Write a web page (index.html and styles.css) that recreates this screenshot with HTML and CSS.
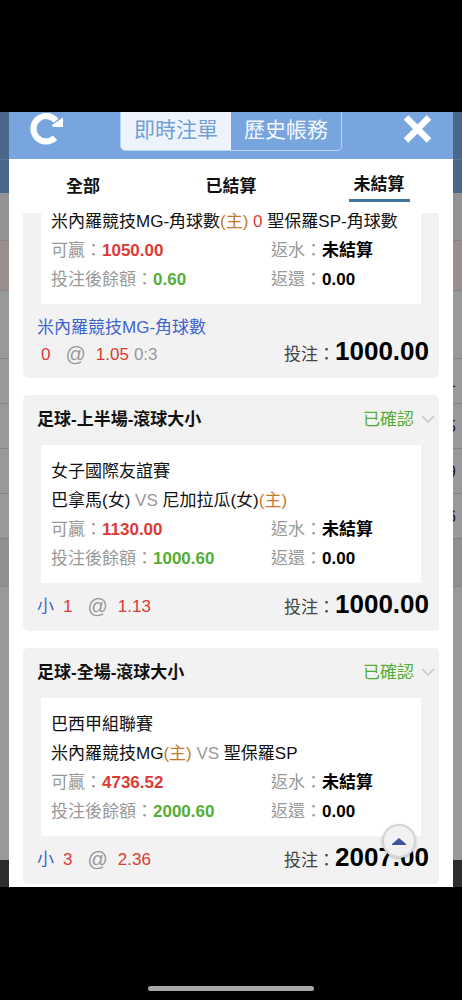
FILE: index.html
```html
<!DOCTYPE html>
<html lang="zh-Hant">
<head>
<meta charset="utf-8">
<meta name="viewport" content="width=device-width, initial-scale=1">
<title>未結算注單</title>
<link rel="stylesheet" href="styles.css">
</head>
<body>
<div class="screen">
  <div class="stage">
    <div class="backdrop" aria-hidden="true">
      <div class="row nav"></div>
      <div class="row subnav"></div>
      <div class="row head"></div>
      <div class="row pink"></div>
      <div class="row tall"></div>
      <div class="row">1</div>
      <div class="row">5</div>
      <div class="row">9</div>
      <div class="row">6</div>
      <div class="row group"></div>
      <div class="row rest"></div>
      <div class="row foot"></div>
    </div>
    <main class="panel">
      <header class="bar">
        <button class="icon-btn refresh" type="button" aria-label="重新整理">
          <svg width="36" height="36" viewBox="0 0 36 36"><path d="M26 25.800A12.700 12.700 0 1 1 27 8.700" fill="none" stroke="#fff" stroke-width="6.200"/><path d="M34 5.500V15H24L23 13z" fill="#fff"/></svg>
        </button>
        <div class="switch">
          <button class="switch-btn active" type="button">即時注單</button>
          <button class="switch-btn" type="button">歷史帳務</button>
        </div>
        <button class="icon-btn close" type="button" aria-label="關閉">
          <svg width="30" height="30" viewBox="0 0 30 30"><path d="M3 3.500l23 23M26 3.500l-23 23" stroke="#fff" stroke-width="6.400"/></svg>
        </button>
      </header>
      <nav class="tabs">
        <button class="tab" type="button">全部</button>
        <button class="tab" type="button">已結算</button>
        <button class="tab current" type="button"><span>未結算</span></button>
      </nav>
      <div class="list">
        <article class="card">
          <div class="box">
            <p>米內羅競技MG-角球數<span class="home">(主)</span> <span class="red">0</span> 聖保羅SP-角球數</p>
            <dl class="stats">
              <div><dt>可贏：</dt><dd class="red">1050.00</dd></div>
              <div><dt>返水：</dt><dd>未結算</dd></div>
              <div><dt>投注後餘額：</dt><dd class="green">0.60</dd></div>
              <div><dt>返還：</dt><dd>0.00</dd></div>
            </dl>
          </div>
          <footer class="card-foot tall-foot">
            <div>
              <div class="blue">米內羅競技MG-角球數</div>
              <div class="pick indent"><span class="line">0</span><span class="at">@</span><span class="odds">1.05</span><span class="score">0:3</span></div>
            </div>
            <div class="stake"><span>投注：</span><strong>1000.00</strong></div>
          </footer>
        </article>

        <article class="card">
          <header class="card-head">
            <h2>足球-上半場-滾球大小</h2>
            <button class="status" type="button">已確認
              <svg width="14" height="9" viewBox="0 0 14 9"><path d="M1 1l6 6 6-6" fill="none" stroke="#cfcfcf" stroke-width="1.800"/></svg>
            </button>
          </header>
          <div class="box">
            <p>女子國際友誼賽</p>
            <p>巴拿馬(女) <span class="muted">VS</span> 尼加拉瓜(女)<span class="home">(主)</span></p>
            <dl class="stats">
              <div><dt>可贏：</dt><dd class="red">1130.00</dd></div>
              <div><dt>返水：</dt><dd>未結算</dd></div>
              <div><dt>投注後餘額：</dt><dd class="green">1000.60</dd></div>
              <div><dt>返還：</dt><dd>0.00</dd></div>
            </dl>
          </div>
          <footer class="card-foot">
            <div class="pick"><span class="side">小</span><span class="line">1</span><span class="at">@</span><span class="odds">1.13</span></div>
            <div class="stake"><span>投注：</span><strong>1000.00</strong></div>
          </footer>
        </article>

        <article class="card">
          <header class="card-head">
            <h2>足球-全場-滾球大小</h2>
            <button class="status" type="button">已確認
              <svg width="14" height="9" viewBox="0 0 14 9"><path d="M1 1l6 6 6-6" fill="none" stroke="#cfcfcf" stroke-width="1.800"/></svg>
            </button>
          </header>
          <div class="box">
            <p>巴西甲組聯賽</p>
            <p>米內羅競技MG<span class="home">(主)</span> <span class="muted">VS</span> 聖保羅SP</p>
            <dl class="stats">
              <div><dt>可贏：</dt><dd class="red">4736.52</dd></div>
              <div><dt>返水：</dt><dd>未結算</dd></div>
              <div><dt>投注後餘額：</dt><dd class="green">2000.60</dd></div>
              <div><dt>返還：</dt><dd>0.00</dd></div>
            </dl>
          </div>
          <footer class="card-foot">
            <div class="pick"><span class="side">小</span><span class="line">3</span><span class="at">@</span><span class="odds">2.36</span></div>
            <div class="stake"><span>投注：</span><strong>2007.00</strong></div>
          </footer>
        </article>
      </div>
      <button class="to-top" type="button" aria-label="回到頂部">
        <svg width="14" height="7" viewBox="0 0 14 7"><path d="M7 0l7 6v1H0V6z" fill="#3f529a"/></svg>
      </button>
    </main>
  </div>
  <div class="home-area"><div class="home-bar"></div></div>
</div>
</body>
</html>
```

FILE: styles.css
```css
* {
  box-sizing: border-box;
}

body {
  margin: 0;
  background: #000;
  color: #111;
  font: 17px/29px "Liberation Sans", "Noto Sans CJK TC", sans-serif;
}

button {
  border: 0;
  padding: 0;
  background: none;
  color: inherit;
  font: inherit;
  cursor: pointer;
}

h2, p, dl, dd {
  margin: 0;
}

svg {
  display: block;
}

.screen {
  display: flex;
  flex-direction: column;
  height: 100vh;
  padding-top: 112px;
}

.stage {
  position: relative;
  flex: 1;
  min-height: 0;
  padding: 0 9px;
  overflow: hidden;
}

/* Dimmed page behind the panel */
.backdrop {
  position: absolute;
  inset: 0;
  display: flex;
  flex-direction: column;
  background: #999;
}

.row {
  flex: none;
  height: 45px;
  padding-right: 6px;
  border-bottom: 1px solid #858585;
  color: #222;
  font-size: 16px;
  line-height: 45px;
  text-align: right;
}

.nav {
  height: 48px;
  background: #4a678c;
  border-color: #59749a;
}

.subnav {
  height: 33px;
  background: #4a678c;
  border: 0;
}

.head {
  height: 48px;
  background: #939393;
}

.pink {
  height: 50px;
  background: #998d8d;
}

.tall {
  height: 68px;
}

.group {
  height: 48px;
  background: #8f8f8f;
}

.rest {
  flex: 1;
  border: 0;
}

.foot {
  height: 27px;
  background: #2d2d2d;
  border: 0;
}

/* Panel */
.panel {
  position: relative;
  display: flex;
  flex-direction: column;
  height: 100%;
  background: #fff;
}

.bar {
  flex: none;
  display: flex;
  justify-content: space-between;
  height: 47px;
  padding: 0 20px;
  background: #79a5df;
}

.icon-btn {
  display: flex;
  align-items: flex-start;
  width: 36px;
}

.close {
  justify-content: flex-end;
  padding-top: 2px;
}

.switch {
  display: flex;
  height: 39px;
  border: 1px solid #b9d3f3;
  border-top: 0;
  border-radius: 0 0 5px 5px;
  overflow: hidden;
}

.switch-btn {
  width: 110px;
  padding-bottom: 3px;
  color: #f3f8ff;
  font-size: 21px;
}

.switch-btn.active {
  background: #edf3fb;
  color: #719fd6;
}

.tabs {
  flex: none;
  display: grid;
  grid-template-columns: repeat(3, 1fr);
  height: 54px;
}

.tab {
  display: flex;
  justify-content: center;
  align-items: center;
  font-weight: 700;
}

.tab.current {
  align-items: flex-start;
  padding-top: 11px;
}

.current span {
  padding: 0 5px;
  border-bottom: 3px solid #3f739f;
}

.list {
  flex: 1;
  min-height: 0;
  display: flex;
  flex-direction: column;
  justify-content: flex-end;
  gap: 17px;
  padding: 0 14px 3px;
  overflow: hidden;
}

.card {
  flex: none;
  border-radius: 5px;
  background: #f2f2f2;
}

.card-head {
  display: flex;
  justify-content: space-between;
  align-items: center;
  height: 50px;
  padding: 0 4px 2px 14px;
}

.card-head h2 {
  font-size: 17px;
}

.status {
  display: flex;
  align-items: center;
  gap: 7px;
  color: #55ad35;
}

.box {
  margin: 0 18px;
  padding: 12px 10px 10px;
  background: #fff;
  white-space: nowrap;
}

.stats {
  display: grid;
  grid-template-columns: 11fr 7fr;
}

.stats div {
  display: flex;
}

dt {
  color: #999;
}

dd {
  color: #000;
  font-weight: 700;
}

.card-foot {
  display: flex;
  justify-content: space-between;
  align-items: center;
  height: 48px;
  padding: 0 10px 2px 14px;
  line-height: 27px;
}

.tall-foot {
  align-items: flex-end;
  height: 74px;
  padding-bottom: 10px;
}

.pick {
  display: flex;
  align-items: center;
  color: #dc3b35;
}

.indent {
  padding-left: 4px;
}

.side {
  margin-right: 9px;
}

.line {
  margin-right: 15px;
}

.at {
  margin-right: 10px;
  font-size: 20px;
}

.score {
  margin-left: 5px;
}

.stake {
  display: flex;
  align-items: baseline;
  color: #444;
}

.stake strong {
  color: #000;
  font-size: 26px;
}

.home {
  color: #c27a2c;
}

.red {
  color: #dc3b35;
}

.green {
  color: #55ad35;
}

.blue, .side {
  color: #3e65d0;
}

.muted, .at, .score {
  color: #999;
}

.to-top {
  position: absolute;
  right: 37px;
  bottom: 29px;
  display: flex;
  justify-content: center;
  align-items: center;
  width: 34px;
  height: 34px;
  border: 2px solid #d5d5d8;
  border-radius: 50%;
  background: #f1f1f2;
  box-shadow: 0 1px 3px #0003;
}

.home-area {
  flex: none;
  display: flex;
  justify-content: center;
  align-items: flex-end;
  height: 113px;
  padding-bottom: 9px;
}

.home-bar {
  width: 36%;
  height: 5px;
  border-radius: 3px;
  background: #a8a8a8;
}
```
